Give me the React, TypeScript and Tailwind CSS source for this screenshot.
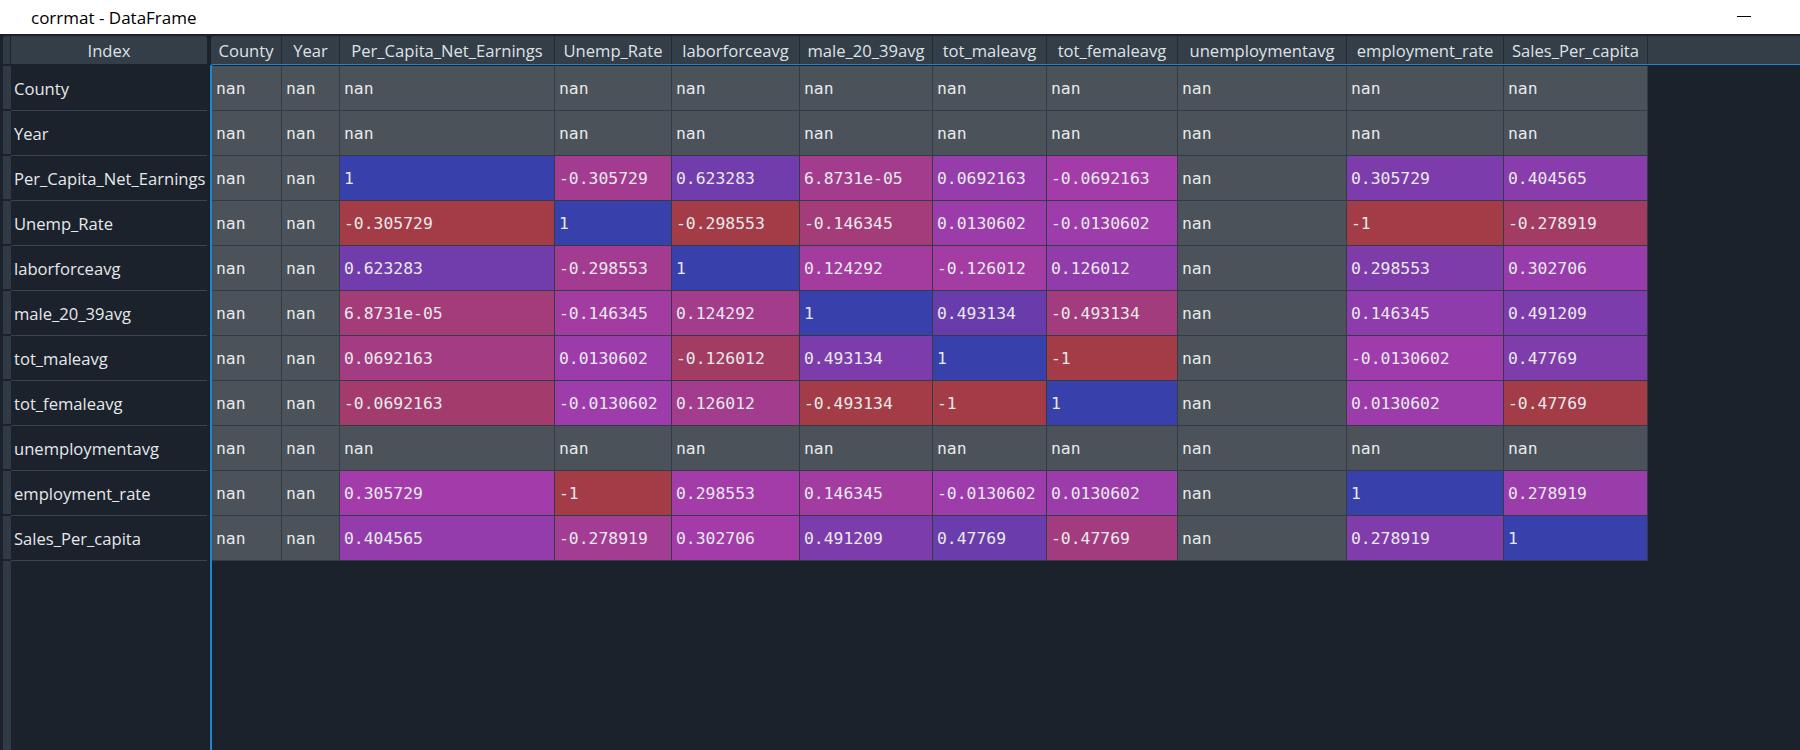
import React from "react";

const N = NaN;

const cols: { name: string; w: string; hw: string }[] = [
  { name: "County", w: "w-[70px]", hw: "w-[71px]" },
  { name: "Year", w: "w-[58px]", hw: "w-[58px]" },
  { name: "Per_Capita_Net_Earnings", w: "w-[215px]", hw: "w-[215px]" },
  { name: "Unemp_Rate", w: "w-[117px]", hw: "w-[117px]" },
  { name: "laborforceavg", w: "w-[128px]", hw: "w-[128px]" },
  { name: "male_20_39avg", w: "w-[133px]", hw: "w-[133px]" },
  { name: "tot_maleavg", w: "w-[114px]", hw: "w-[114px]" },
  { name: "tot_femaleavg", w: "w-[131px]", hw: "w-[131px]" },
  { name: "unemploymentavg", w: "w-[169px]", hw: "w-[169px]" },
  { name: "employment_rate", w: "w-[157px]", hw: "w-[157px]" },
  { name: "Sales_Per_capita", w: "w-[144px]", hw: "w-[144px]" },
];

const rowNames = [
  "County",
  "Year",
  "Per_Capita_Net_Earnings",
  "Unemp_Rate",
  "laborforceavg",
  "male_20_39avg",
  "tot_maleavg",
  "tot_femaleavg",
  "unemploymentavg",
  "employment_rate",
  "Sales_Per_capita",
];

type C = [number, string];
const nanC: C = [N, "nan"];
const row = (vals: (string | null)[]): C[] =>
  vals.map((s) => (s === null ? nanC : ([parseFloat(s), s] as C)));

const allNan = row(Array(11).fill(null));

const data: C[][] = [
  allNan,
  allNan,
  row([null, null, "1", "-0.305729", "0.623283", "6.8731e-05", "0.0692163", "-0.0692163", null, "0.305729", "0.404565"]),
  row([null, null, "-0.305729", "1", "-0.298553", "-0.146345", "0.0130602", "-0.0130602", null, "-1", "-0.278919"]),
  row([null, null, "0.623283", "-0.298553", "1", "0.124292", "-0.126012", "0.126012", null, "0.298553", "0.302706"]),
  row([null, null, "6.8731e-05", "-0.146345", "0.124292", "1", "0.493134", "-0.493134", null, "0.146345", "0.491209"]),
  row([null, null, "0.0692163", "0.0130602", "-0.126012", "0.493134", "1", "-1", null, "-0.0130602", "0.47769"]),
  row([null, null, "-0.0692163", "-0.0130602", "0.126012", "-0.493134", "-1", "1", null, "0.0130602", "-0.47769"]),
  allNan,
  row([null, null, "0.305729", "-1", "0.298553", "0.146345", "-0.0130602", "0.0130602", null, "1", "0.278919"]),
  row([null, null, "0.404565", "-0.278919", "0.302706", "0.491209", "0.47769", "-0.47769", null, "0.278919", "1"]),
];

const colMinMax = cols.map((_, ci) => {
  const vals = data.map((r) => r[ci][0]).filter((v) => !isNaN(v));
  if (!vals.length) return [0, 0];
  return [Math.min(...vals), Math.max(...vals)];
});

function hsv(h: number, s: number, v: number): [number, number, number] {
  const i = Math.floor(h * 6);
  const f = h * 6 - i;
  const p = v * (1 - s);
  const q = v * (1 - f * s);
  const t = v * (1 - (1 - f) * s);
  const m = i % 6;
  const r = [v, q, p, p, t, v][m];
  const g = [t, v, v, q, p, p][m];
  const b = [p, p, t, v, v, q][m];
  return [r * 255, g * 255, b * 255];
}

function bg(v: number, ci: number): string {
  if (isNaN(v)) return "#4b5259";
  const [mn, mx] = colMinMax[ci];
  const hue = mx === mn ? 0.66 : 0.66 + (0.33 * (mx - v)) / (mx - mn);
  const [r, g, b] = hsv(hue, 0.7, 1);
  const base = [25, 35, 45];
  const a = 0.6;
  const c = [r, g, b].map((x, i) => Math.round(a * x + (1 - a) * base[i]));
  return `rgb(${c[0]},${c[1]},${c[2]})`;
}

export default function App() {
  return (
    <div
      className="w-[1800px] h-[750px] bg-[#1b222c] flex flex-col overflow-hidden"
      style={{ fontFamily: '"Open Sans", "Noto Sans", sans-serif' }}
    >
      <div className="h-[34px] bg-white flex items-center shrink-0">
        <span className="ml-[31px] text-[17px] text-black leading-none pt-[1px]">corrmat - DataFrame</span>
        <div className="ml-auto mr-[49px] w-[14px] h-[1px] bg-black -mt-[2px]" />
      </div>
      <div className="flex flex-1 pt-[2px] min-h-0">
        {/* left (index) pane */}
        <div className="w-[207px] flex flex-col shrink-0">
          <div className="flex h-[28px] shrink-0">
            <div className="w-[3px]" />
            <div className="w-[7px] bg-[#303b45] rounded-tl-[3px]" />
            <div className="w-[1px]" />
            <div className="flex-1 bg-[#333e49] rounded-tr-[3px] flex items-center justify-center pt-[3px] text-[16.6px] text-[#dfe2e5]">
              Index
            </div>
          </div>
          <div className="h-[2px] shrink-0" />
          {rowNames.map((n) => (
            <div key={n} className="flex h-[45px] shrink-0">
              <div className="w-[3px]" />
              <div className="w-[8px] bg-[#303b45] border-b-[2px] border-[#1b222c]" />
              <div className="flex-1 border-b border-[#3a4450] flex items-center pl-[3px] pt-[3px] text-[16.6px] text-[#e6e8ea] whitespace-nowrap">
                {n}
              </div>
            </div>
          ))}
          <div className="flex flex-1">
            <div className="w-[3px]" />
            <div className="w-[8px] bg-[#303b45]" />
          </div>
        </div>
        <div className="w-[3px] shrink-0" />
        {/* right (data) pane */}
        <div className="flex-1 flex flex-col min-w-0">
          <div className="flex h-[28px] shrink-0 pl-[1px]">
            {cols.map((c, i) => (
              <div
                key={c.name}
                className={`${c.hw} shrink-0 bg-[#333e49] border-r border-[#222a33] flex items-center justify-center pt-[3px] overflow-hidden whitespace-nowrap text-[16.6px] text-[#dfe2e5] ${i === 0 ? "rounded-tl-[3px]" : ""}`}
              >
                {c.name}
              </div>
            ))}
            <div className="flex-1 bg-[#333e49]" />
          </div>
          <div className="flex-1 border-t border-l-[2px] border-[#1d86d0] rounded-tl-[3px] pt-[1px]">
            {data.map((r, ri) => (
              <div key={ri} className="flex h-[45px]">
                {r.map(([v, s], ci) => (
                  <div
                    key={ci}
                    className={`${cols[ci].w} shrink-0 border-r border-b border-[#333b44] flex items-center pl-[4px] pt-[2px] text-[16.4px] text-[#e8e9eb] whitespace-nowrap overflow-hidden`}
                    style={{ backgroundColor: bg(v, ci), fontFamily: '"DejaVu Sans Mono", monospace' }}
                  >
                    {s}
                  </div>
                ))}
              </div>
            ))}
          </div>
        </div>
      </div>
    </div>
  );
}
